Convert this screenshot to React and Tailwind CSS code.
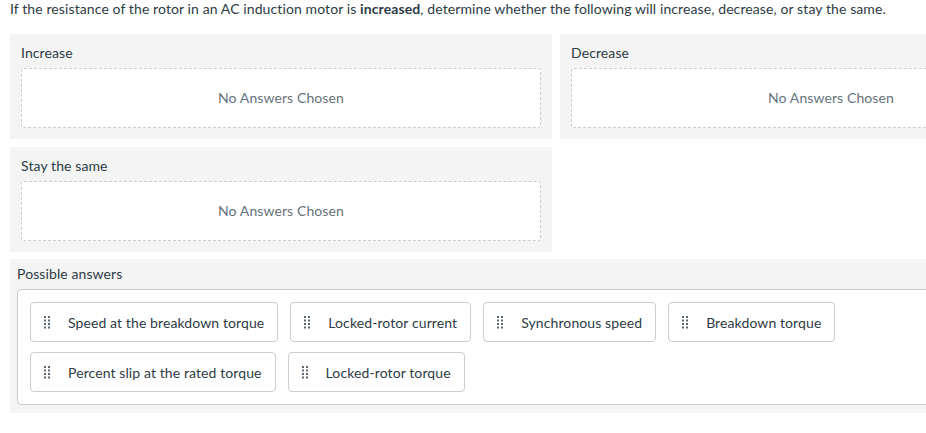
import React from 'react';

const choices = [
  ['Speed at the breakdown torque', 'Locked-rotor current', 'Synchronous speed', 'Breakdown torque'],
  ['Percent slip at the rated torque', 'Locked-rotor torque'],
];

function Handle() {
  return (
    <svg width="6" height="13" viewBox="0 0 6 13" className="shrink-0">
      {[0, 1, 2, 3].map((r) =>
        [0, 1].map((c) => (
          <rect key={`${r}-${c}`} x={c * 4} y={r * 3.5} width="2" height="2" fill="#5a6670" />
        ))
      )}
    </svg>
  );
}

function Bucket({ label }) {
  return (
    <div className="bg-[#f4f4f4] px-[11px] pt-[10px] pb-[11px]">
      <div className="text-[14px] leading-[18px] text-[#2d3b45] mb-[6px]">{label}</div>
      <div className="h-[60px] bg-white border border-dashed border-[#c7cdd1] rounded-[3px] flex items-center justify-center text-[14px] text-[#66727b] pb-[1px]">
        No Answers Chosen
      </div>
    </div>
  );
}

export default function App() {
  return (
    <div className="w-[926px] h-[433px] overflow-hidden bg-white tracking-[0.1px]" style={{ fontFamily: 'Lato, "Open Sans", sans-serif' }}>
      <div className="w-[1112px] px-[10px]">
        <p className="text-[14px] leading-[18px] text-[#2d3b45]">
          If the resistance of the rotor in an AC induction motor is <strong className="font-bold">increased</strong>, determine whether the following will increase, decrease, or stay the same.
        </p>

        <div className="grid grid-cols-2 gap-[8px] mt-[16px]">
          <Bucket label="Increase" />
          <Bucket label="Decrease" />
          <Bucket label="Stay the same" />
        </div>

        <div className="bg-[#f4f4f4] mt-[7px] px-[7px] pt-[6px] pb-[8px]">
          <div className="text-[14px] leading-[18px] text-[#2d3b45] mb-[6px]">Possible answers</div>
          <div className="bg-white border border-[#c7cdd1] rounded-[4px] px-[12px] py-[12px] flex flex-col gap-[10px]">
            {choices.map((row, i) => (
              <div key={i} className="flex gap-[12px]">
                {row.map((c) => (
                  <div
                    key={c}
                    className="h-[40px] flex items-center gap-[18px] pl-[13px] pr-[13px] border border-[#c7cdd1] rounded-[4px] bg-white text-[14px] text-[#2d3b45]"
                  >
                    <Handle />
                    <span>{c}</span>
                  </div>
                ))}
              </div>
            ))}
          </div>
        </div>
      </div>
    </div>
  );
}
